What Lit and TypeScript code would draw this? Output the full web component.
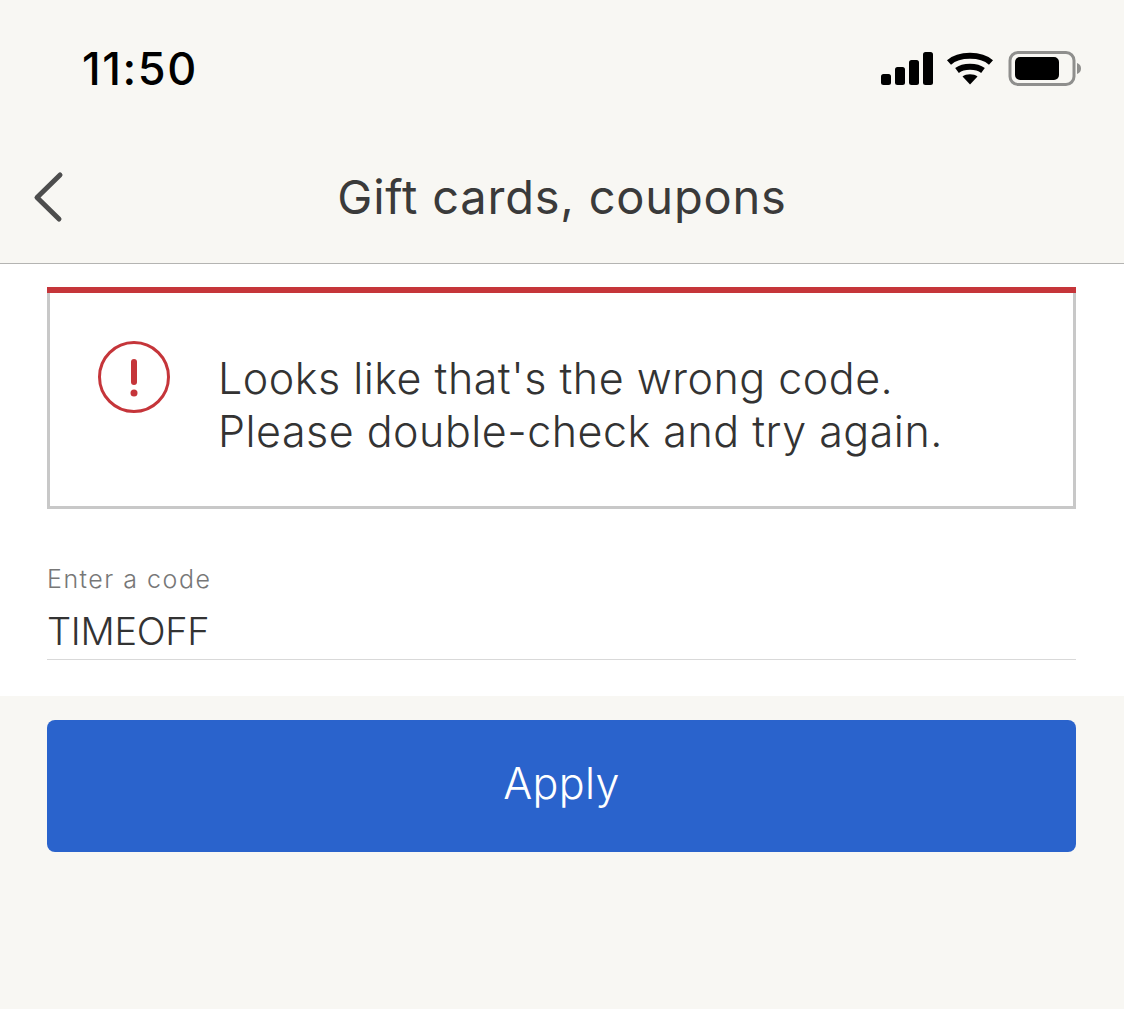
import { LitElement, html, css } from "lit";
import { customElement } from "lit/decorators.js";

@customElement("app-root")
export class AppRoot extends LitElement {
  static styles = css`
    :host {
      display: block;
      width: 1124px;
      height: 1009px;
      overflow: hidden;
      background: #f8f7f3;
      font-family: Inter, "Liberation Sans", sans-serif;
      color: #333;
    }

    .status {
      height: 136px;
      box-sizing: border-box;
      padding: 43px 43px 0 82px;
      display: flex;
      justify-content: space-between;
      align-items: flex-start;
    }

    .time {
      font-size: 45px;
      line-height: 52px;
      font-weight: 500;
      letter-spacing: 1.6px;
      color: #000;
    }

    .status-icons {
      display: block;
      margin-top: 8px;
    }

    .nav {
      height: 128px;
      box-sizing: border-box;
      border-bottom: 1px solid #b4b4b2;
      display: flex;
      justify-content: center;
      padding-top: 33px;
      position: relative;
    }

    .nav h1 {
      margin: 0;
      font-size: 47px;
      line-height: 56px;
      font-weight: 400;
      letter-spacing: 0.8px;
      color: #3a3a3a;
    }

    .back {
      position: absolute;
      left: 30px;
      top: 33px;
    }

    .panel {
      background: #fff;
      height: 432px;
      box-sizing: border-box;
      padding: 23px 48px 0 47px;
    }

    .alert-bar {
      height: 6px;
      background: #c5353a;
    }

    .alert {
      height: 216px;
      box-sizing: border-box;
      border: 3px solid #c8c8c8;
      border-top: 0;
      display: flex;
      padding: 47px 0 0 48px;
    }

    .alert svg {
      flex: none;
      display: block;
      margin-left: -1px;
    }

    .alert p {
      margin: 12px 0 0 47px;
      font-size: 43px;
      line-height: 53px;
      font-weight: 300;
      letter-spacing: 0.5px;
      color: #333;
    }

    .field {
      margin-top: 55px;
      border-bottom: 1px solid #d9d9d9;
      height: 96px;
      box-sizing: border-box;
    }

    .field label {
      display: block;
      font-size: 25px;
      line-height: 30px;
      font-weight: 300;
      letter-spacing: 1.5px;
      color: #777;
    }

    .field .value {
      margin-top: 14px;
      font-size: 38px;
      line-height: 46px;
      font-weight: 300;
      letter-spacing: -0.3px;
      color: #333;
    }

    .actions {
      padding: 24px 48px 0 47px;
    }

    .apply {
      display: block;
      width: 100%;
      height: 132px;
      border: 0;
      border-radius: 8px;
      background: #2a63cc;
      color: #fff;
      font-family: inherit;
      font-size: 43px;
      font-weight: 300;
      letter-spacing: 0.3px;
      padding: 0 0 6px;
    }
  `;

  render() {
    return html`
      <div class="status">
        <span class="time">11:50</span>
        <svg class="status-icons" width="200" height="36" viewBox="0 0 200 36">
          <rect x="0" y="23" width="10" height="11" rx="2.5" fill="#000" />
          <rect x="14" y="16" width="10" height="18" rx="2.5" fill="#000" />
          <rect x="28" y="9" width="10" height="25" rx="2.5" fill="#000" />
          <rect x="42" y="1" width="10" height="33" rx="2.5" fill="#000" />
          <g fill="none" stroke="#000" stroke-width="6">
            <path d="M68 11.5 C78 2.5 100 2.5 110 11.5" />
            <path d="M76 19.5 C82.500 14.500 95.500 14.500 102 19.500" />
          </g>
          <path d="M81.500 25.500 C85 22.500 93 22.500 96.500 25.500 L89 33.500 Z" fill="#000" />
          <rect x="129" y="1.500" width="64" height="32" rx="8" fill="none" stroke="#8f8f8d" stroke-width="3" />
          <rect x="134" y="6" width="44" height="23" rx="5" fill="#000" />
          <path d="M196 12 C199 13 200 15 200 17.500 C200 20 199 22 196 23 Z" fill="#8f8f8d" />
        </svg>
      </div>
      <div class="nav">
        <svg class="back" width="36" height="56" viewBox="0 0 36 56">
          <path d="M30 6 L7 28.500 L29 50" fill="none" stroke="#4d4d4d" stroke-width="5" stroke-linecap="round" stroke-linejoin="round" />
        </svg>
        <h1>Gift cards, coupons</h1>
      </div>
      <div class="panel">
        <div class="alert-bar"></div>
        <div class="alert">
          <svg width="74" height="74" viewBox="0 0 74 74">
            <circle cx="37" cy="37" r="34.500" fill="none" stroke="#c5353a" stroke-width="3" />
            <path d="M37 22 V42" stroke="#c5353a" stroke-width="6" stroke-linecap="round" />
            <circle cx="37" cy="53" r="3.500" fill="#c5353a" />
          </svg>
          <p>Looks like that's the wrong code.<br />Please double-check and try again.</p>
        </div>
        <div class="field">
          <label>Enter a code</label>
          <div class="value">TIMEOFF</div>
        </div>
      </div>
      <div class="actions">
        <button class="apply">Apply</button>
      </div>
    `;
  }
}

declare global {
  interface HTMLElementTagNameMap {
    "app-root": AppRoot;
  }
}
